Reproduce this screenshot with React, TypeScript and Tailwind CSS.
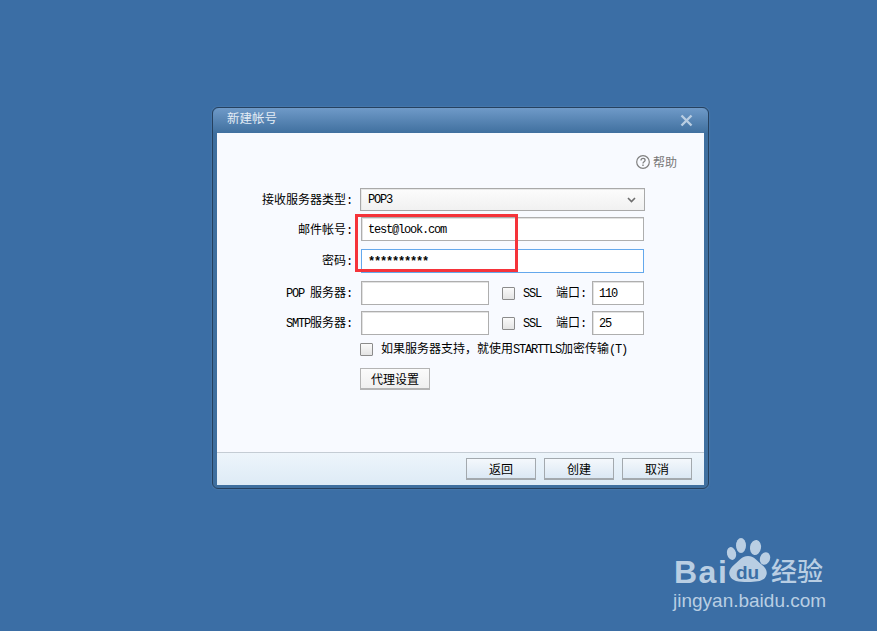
import React from 'react';

const CJK = 'font-["Noto_Sans_CJK_SC",sans-serif]';
const fieldClass =
  'h-6 border bg-white px-[6px] pt-[1px] font-["Liberation_Mono",monospace] text-xs tracking-[-1.2px] text-black outline-none';
const greyField = 'border-[#aeaeae] shadow-[inset_1px_1px_0_#e2e2e2]';
const buttonClass =
  'flex h-[22px] w-[70px] items-center justify-center border border-[#a3a9ae] border-b-2 bg-gradient-to-b from-[#f4f8fc] to-[#dbe8f4] text-xs text-black';

// half-width latin, the way the bitmap font in the screenshot sets it
function Latin({ children }: { children: React.ReactNode }) {
  return (
    <span className='inline-block font-["Liberation_Mono",monospace] text-xs leading-none tracking-[-1.2px]'>
      {children}
    </span>
  );
}

function Checkbox() {
  return (
    <span className="block h-[13px] w-[13px] shrink-0 rounded-[1px] border border-[#8b8b8b] bg-gradient-to-b from-[#fafafa] to-[#e4e4e4]" />
  );
}

function Label({ children, className = '' }: { children: React.ReactNode; className?: string }) {
  return (
    <div className={`w-[135px] shrink-0 text-right text-xs leading-none text-black ${className}`}>
      {children}
      <Latin>:</Latin>
    </div>
  );
}

function ServerRow({ label, port, className }: { label: React.ReactNode; port: string; className: string }) {
  return (
    <div className={`flex items-center ${className}`}>
      <Label>{label}</Label>
      <input readOnly className={`${fieldClass} ${greyField} ml-[9px] w-[128px]`} />
      <div className="ml-[13px]">
        <Checkbox />
      </div>
      <div className="ml-2 w-[33px] text-xs leading-none">
        <Latin>SSL</Latin>
      </div>
      <div className="w-[36px] text-xs leading-none text-black">
        端口<Latin>:</Latin>
      </div>
      <input readOnly value={port} className={`${fieldClass} ${greyField} w-[52px]`} />
    </div>
  );
}

function BaiduMark() {
  return (
    <div className="absolute left-[672px] top-[532px] h-[85px] w-[160px] text-[#b9cee3]">
      <span className='absolute left-[2px] top-[24px] font-["Liberation_Sans",sans-serif] text-[32px] font-bold leading-none tracking-[1.5px]'>
        Bai
      </span>
      <svg className="absolute left-[53px] top-0" width="48" height="54" viewBox="0 0 48 54" fill="currentColor">
        <ellipse cx="6.5" cy="21.5" rx="4.5" ry="6.5" transform="rotate(-15 6.5 21.5)" />
        <ellipse cx="16" cy="13.5" rx="5" ry="7.5" />
        <ellipse cx="30.5" cy="15.5" rx="5.5" ry="7.5" transform="rotate(10 30.5 15.5)" />
        <ellipse cx="40" cy="26.5" rx="5" ry="6.5" transform="rotate(20 40 26.5)" />
        <path d="M23 24c6 0 8 4 13 8 5 4 7 8 5 12-2 5-8 6-18 6s-16-1-18-6c-2-4 0-8 5-12 5-4 7-8 13-8z" />
      </svg>
      <span className='absolute left-[64px] top-[31px] font-["Liberation_Sans",sans-serif] text-[19px] font-bold leading-none text-[#3b6ea5]'>
        du
      </span>
      <span className={`absolute left-[99px] top-[25px] ${CJK} text-[26px] font-medium leading-none`}>经验</span>
      <span className='absolute left-[1px] top-[59px] font-["Liberation_Sans",sans-serif] text-[19px] leading-none'>
        jingyan.baidu.com
      </span>
    </div>
  );
}

export default function App() {
  return (
    <div className={`relative h-[631px] w-[877px] overflow-hidden bg-[#3b6ea5] pl-[212px] pt-[107px] ${CJK}`}>
      {/* dialog */}
      <div className="flex h-[382px] w-[497px] flex-col rounded-md border border-[#26415f] bg-[#3f6f9f] shadow-[0_0_2px_rgba(120,160,200,0.6)]">
        <div className="flex h-[25px] shrink-0 items-center justify-between rounded-t-md bg-gradient-to-b from-[#6f9ac8] to-[#40709f] pl-[14px] pr-[15px]">
          <span className="mb-[5px] text-[12.5px] leading-none text-[#e3ecf5]">新建帐号</span>
          <svg width="13" height="13" viewBox="0 0 13 13" stroke="#b9cde2" strokeWidth="2.4" fill="none">
            <path d="M1.5 1.5l10 10M11.5 1.5l-10 10" />
          </svg>
        </div>

        <div className="mx-1 flex h-[352px] w-[487px] flex-col bg-[#f8faff]">
          <div className="mr-[27px] mt-[22px] flex h-[14px] items-center justify-end gap-[3px] text-xs leading-none text-[#777777]">
            <svg width="14" height="14" viewBox="0 0 14 14" fill="none" stroke="#808080">
              <circle cx="7" cy="7" r="6.3" strokeWidth="1.2" />
              <path d="M5 5.4c0-1.3 1-2 2.1-2s2 .7 2 1.8c0 1.6-2.1 1.6-2.1 3.3" strokeWidth="1.3" />
              <path d="M7 9.6v1.4" strokeWidth="1.4" />
            </svg>
            帮助
          </div>

          <div className="mt-[19px] flex items-center">
            <Label className="pt-[1px]">接收服务器类型</Label>
            <div className="ml-2 flex h-[23px] w-[285px] items-center justify-between border border-[#a9a9a9] bg-gradient-to-b from-[#fcfcfc] to-[#f1f1f1] pl-[7px] pr-2 pt-[1px] text-xs leading-none text-black shadow-[inset_1px_1px_0_#e8e8e8]">
              <Latin>POP3</Latin>
              <svg width="9" height="6" viewBox="0 0 9 6" fill="none" stroke="#6e6e6e" strokeWidth="1.6">
                <path d="M1 1l3.5 3.5L8 1" />
              </svg>
            </div>
          </div>

          <div className="mt-[6px] flex items-center">
            <Label className="pt-[1px]">邮件帐号</Label>
            <input readOnly value="test@look.com" className={`${fieldClass} ${greyField} ml-[9px] w-[283px]`} />
          </div>

          <div className="mt-2 flex items-center">
            <Label>密码</Label>
            <input
              readOnly
              value="**********"
              className={`${fieldClass} ml-[9px] w-[283px] border-[#64a8ec] font-bold`}
            />
          </div>

          <ServerRow
            className="mt-2"
            port="110"
            label={
              <>
                <Latin>POP</Latin>
                <span className="ml-[6px]">服务器</span>
              </>
            }
          />
          <ServerRow
            className="mt-[6px]"
            port="25"
            label={
              <>
                <Latin>SMTP</Latin>服务器
              </>
            }
          />

          <div className="ml-[143px] mt-[7px] flex items-center text-xs leading-none text-black">
            <Checkbox />
            <span className="ml-2">
              如果服务器支持，就使用<Latin>STARTTLS</Latin>加密传输<Latin>(T)</Latin>
            </span>
          </div>

          <button className="ml-[143px] mt-3 flex h-[22px] w-[70px] items-center justify-center border border-[#b4b4b4] border-b-2 bg-gradient-to-b from-[#fbfbfb] to-[#efefef] text-xs text-black">
            代理设置
          </button>

          <div className="mt-auto flex h-[33px] items-center justify-end gap-2 border-t border-[#c4ccd4] bg-gradient-to-b from-[#edf5fb] to-[#deebf6] pr-3">
            <button className={buttonClass}>返回</button>
            <button className={buttonClass}>创建</button>
            <button className={buttonClass}>取消</button>
          </div>
        </div>
      </div>

      {/* red annotation over the screenshot */}
      <div className="absolute left-[355px] top-[214px] h-[58px] w-[163px] border-[3px] border-[#f5333a]" />

      <BaiduMark />
    </div>
  );
}
